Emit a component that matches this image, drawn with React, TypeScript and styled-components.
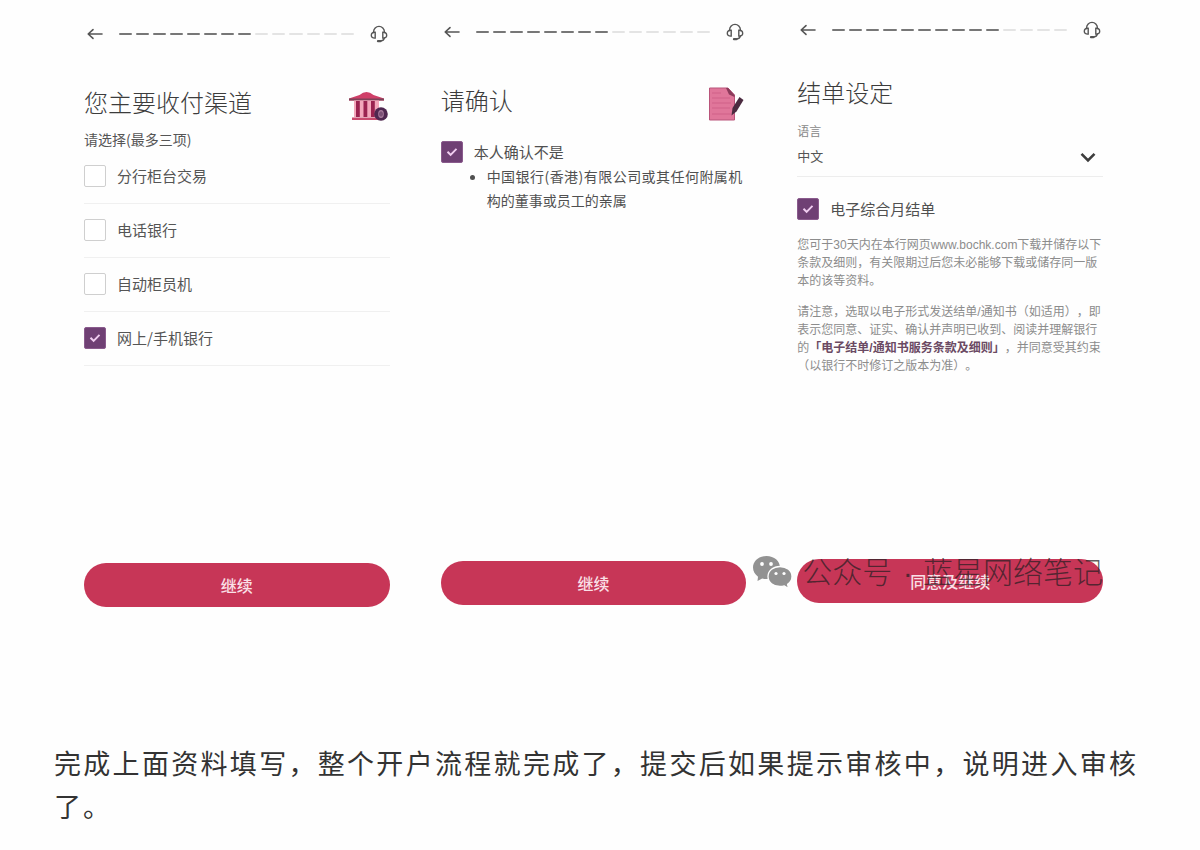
import React from "react";
import styled, { createGlobalStyle } from "styled-components";

const GlobalStyle = createGlobalStyle`
  *, *::before, *::after { box-sizing: border-box; }
  body {
    margin: 0;
    background: #fefefe;
    color: #333;
    font-family: "Noto Sans CJK SC", "Noto Sans", sans-serif;
    text-spacing-trim: space-all;
  }
`;

const Article = styled.main`
  padding-bottom: 20px;
`;

const Stage = styled.section`
  position: relative;
  display: grid;
  grid-template-columns: repeat(3, minmax(0, 1fr));
  align-items: start;
  gap: 51px;
  padding: 0 97px 0 84px;
`;

const Screen = styled.form<{ $top: number }>`
  display: flex;
  flex-direction: column;
  min-height: 583px;
  margin-top: ${(p) => p.$top}px;
`;

const TopBar = styled.header`
  display: flex;
  align-items: center;
  gap: 16px;
  height: 20px;
  padding: 0 2px 0 3px;
`;

const IconButton = styled.button`
  display: flex;
  flex: none;
  padding: 0;
  border: 0;
  background: none;
  color: #555;
`;

const Steps = styled.div`
  display: flex;
  flex: 1;
  gap: 4px;
`;

const Step = styled.span<{ $done: boolean }>`
  flex: 1;
  height: 2px;
  border-radius: 1px;
  background: ${(p) => (p.$done ? "#777" : "#e4e4e4")};
`;

const TitleRow = styled.div<{ $gap: number }>`
  display: flex;
  align-items: center;
  justify-content: space-between;
  height: 36px;
  margin-top: ${(p) => p.$gap}px;
`;

const Title = styled.h2`
  margin: 0;
  font-size: 24px;
  font-weight: 300;
  line-height: 36px;
  color: #3c3c3c;
`;

const Picture = styled.span`
  display: flex;
  padding: 8px 2px 0 0;
`;

const Hint = styled.p`
  margin: 9px 0 0;
  font-size: 14px;
  line-height: 20px;
  color: #555;
`;

const Options = styled.div`
  display: flex;
  flex-direction: column;
  margin-top: 1px;
`;

const Option = styled.label`
  display: flex;
  align-items: center;
  gap: 11px;
  height: 54px;
  padding-bottom: 2px;
  border-bottom: 1px solid #f0f0f0;
  font-size: 15px;
  line-height: 22px;
  color: #555;
`;

const Consent = styled.label<{ $gap: number }>`
  display: flex;
  align-items: center;
  gap: 11px;
  height: 24px;
  margin-top: ${(p) => p.$gap}px;
  font-size: 15px;
  line-height: 22px;
  color: #505050;
`;

const CheckCell = styled.span`
  display: grid;
  flex: none;
  place-items: center;
  > * { grid-area: 1 / 1; }
`;

const CheckInput = styled.input`
  appearance: none;
  width: 22px;
  height: 22px;
  margin: 0;
  border: 1px solid #cfcfcf;
  border-radius: 2px;
  background: #fff;
  &:checked {
    border-color: #8a5b8d;
    background: #6f4074;
  }
  & + svg { visibility: hidden; pointer-events: none; }
  &:checked + svg { visibility: visible; }
`;

const Terms = styled.ul`
  margin: 0;
  padding: 0 4px 0 46px;
  font-size: 14px;
  line-height: 24px;
  color: #505050;
  text-align: justify;
`;

const FieldLabel = styled.label`
  margin-top: 13px;
  font-size: 12px;
  line-height: 16px;
  color: #888;
`;

const SelectWrap = styled.div`
  display: grid;
  align-items: center;
  border-bottom: 1px solid #ededed;
  > * { grid-area: 1 / 1; }
  svg { justify-self: end; margin-right: 7px; pointer-events: none; }
`;

const Select = styled.select`
  appearance: none;
  width: 100%;
  height: 37px;
  padding: 0 0 4px;
  border: 0;
  background: none;
  color: #555;
  font: 13px "Noto Sans CJK SC", sans-serif;
`;

const Legal = styled.p<{ $gap: number }>`
  margin: ${(p) => p.$gap}px 0 0;
  font-family: "Liberation Sans", "Noto Sans CJK SC", sans-serif;
  font-size: 12px;
  line-height: 18px;
  color: #8c8c8c;
  white-space: nowrap;
`;

const TermsLink = styled.a`
  color: #6b4a63;
  font-weight: 700;
  text-decoration: none;
`;

const Submit = styled.button`
  height: 44px;
  margin-top: auto;
  border: 0;
  border-radius: 22px;
  background: #c73657;
  color: #fae0e7;
  font: 500 16px "Noto Sans CJK SC", sans-serif;
`;

const Watermark = styled.div`
  position: absolute;
  right: 97px;
  bottom: 12px;
  display: flex;
  align-items: center;
  gap: 9px;
  font-size: 30px;
  font-weight: 300;
  line-height: 44px;
  color: rgba(40, 30, 35, 0.72);
  white-space: nowrap;
  pointer-events: none;
`;

const Dot = styled.span`
  padding: 0 2px;
  font-family: "Liberation Sans", sans-serif;
  white-space: pre;
`;

const Paragraph = styled.p`
  margin: 134px 62px 0 54px;
  font-size: 27px;
  letter-spacing: 2px;
  line-height: 43px;
  color: #333;
  text-align: justify;
`;

const BackIcon = () => (
  <svg width="16" height="14" viewBox="0 0 16 14" fill="none" stroke="currentColor" strokeWidth="1.6" strokeLinecap="round" strokeLinejoin="round">
    <path d="M15 7H1.2M6 2.6L1.2 7L6 11.4" />
  </svg>
);

const HeadsetIcon = () => (
  <svg width="18" height="18" viewBox="0 0 18 18" fill="none" stroke="currentColor" strokeWidth="1.4" strokeLinecap="round">
    <path d="M3.6 7.5V6.8a5.4 5.4 0 0 1 10.8 0v.7" />
    <path d="M5.2 7.3c-2.3-.3-3.9.9-3.9 2.9s1.6 3.2 3.9 2.9z" />
    <path d="M12.8 7.3c2.3-.3 3.9.9 3.9 2.9s-1.6 3.2-3.9 2.9z" />
    <path d="M14.4 13c-.4 1.6-1.6 2.7-3.6 3" />
    <path d="M8 16.2h2.4" strokeWidth="2.3" />
  </svg>
);

const BankIcon = () => (
  <svg width="40" height="32" viewBox="0 0 40 32">
    <path d="M1 8.5L11.5 5Q18.500 -1 25.5 5L36 8.5V10.5H1z" fill="#cf3f68" />
    <path d="M1 8.5H36V10.5H1z" fill="#7d4258" />
    <path d="M6 10.5H31V27H6z" fill="#f3a7bb" />
    <path d="M8 11h3.8v16H8zM15.5 11h3.8v16h-3.8zM23 11h3.8v16H23z" fill="#9a2350" />
    <path d="M4 27.5H30V30H4z" fill="#c94a6e" />
    <circle cx="33" cy="24" r="6.8" fill="#4f2850" />
    <ellipse cx="33" cy="24" rx="2.2" ry="3.4" fill="none" stroke="#a87a9c" strokeWidth="1.3" />
    <path d="M33 20v8" stroke="#a87a9c" strokeWidth="1" />
  </svg>
);

const FormIcon = () => (
  <svg width="36" height="34" viewBox="0 0 36 34">
    <path d="M1.5 1H20L26.5 8V33H1.5z" fill="#e0769a" stroke="#b9547a" strokeWidth="1" />
    <path d="M18 1H20L26.5 8V10L21 7.5z" fill="#8b3b5b" />
    <path d="M4 6H13M4 11H22M4 16H23M4 21H22M4 27H23" stroke="#cf6087" strokeWidth="1.2" />
    <path d="M31.5 10L35.5 13L28.5 24.500L23.5 28.5L24.500 21z" fill="#4b2b40" />
  </svg>
);

const TickIcon = () => (
  <svg width="12" height="10" viewBox="0 0 12 10" fill="none" stroke="#f0cdf0" strokeWidth="1.9">
    <path d="M1.5 4.8L4.6 7.8L10.5 1.8" />
  </svg>
);

const ChevronIcon = () => (
  <svg width="16" height="11" viewBox="0 0 16 11" fill="none" stroke="#3d3d3d" strokeWidth="2.6">
    <path d="M1.5 1.8L8 8.4L14.5 1.8" />
  </svg>
);

const WeChatIcon = () => (
  <svg width="41" height="34" viewBox="0 0 41 34">
    <path d="M14.5 1C6.7 1 1 6 1 12.6c0 3.8 2 7 5 9.1L5.5 26l4.7-2.6c1.4.4 2.8.7 4.3.7 7.7 0 13.5-5 13.5-11.5S22.200 1 14.500 1z" fill="#929292" />
    <path d="M28 11.5c-6.7 0-12 4.3-12 10s5.3 10 12 10c1.5 0 3-.2 4.3-.6l4.2 2.6-.9-4.2c2.8-1.9 4.4-4.7 4.4-7.8 0-5.7-5.3-10-12-10z" fill="#929292" stroke="#fff" strokeWidth="1.3" />
    <g fill="#fff">
      <circle cx="10" cy="9" r="1.9" />
      <circle cx="19" cy="9" r="1.9" />
      <circle cx="24" cy="18.5" r="1.6" />
      <circle cx="32" cy="18.5" r="1.6" />
    </g>
  </svg>
);

const STEP_COUNT = 14;

function Header({ done }: { done: number }) {
  return (
    <TopBar>
      <IconButton type="button" aria-label="返回"><BackIcon /></IconButton>
      <Steps>
        {Array.from({ length: STEP_COUNT }, (_, i) => (
          <Step key={i} $done={i < done} />
        ))}
      </Steps>
      <IconButton type="button" aria-label="客服"><HeadsetIcon /></IconButton>
    </TopBar>
  );
}

function Checkbox({ checked, id }: { checked?: boolean; id: string }) {
  return (
    <CheckCell>
      <CheckInput type="checkbox" id={id} defaultChecked={checked} />
      <TickIcon />
    </CheckCell>
  );
}

const channels = [
  { id: "branch", label: "分行柜台交易" },
  { id: "phone", label: "电话银行" },
  { id: "atm", label: "自动柜员机" },
  { id: "online", label: "网上/手机银行", checked: true },
];

export default function App() {
  return (
    <Article>
      <GlobalStyle />
      <Stage>
        <Screen $top={24}>
          <Header done={8} />
          <TitleRow $gap={40}>
            <Title>您主要收付渠道</Title>
            <Picture><BankIcon /></Picture>
          </TitleRow>
          <Hint>请选择(最多三项)</Hint>
          <Options>
            {channels.map((c) => (
              <Option key={c.id} htmlFor={c.id}>
                <Checkbox id={c.id} checked={c.checked} />
                {c.label}
              </Option>
            ))}
          </Options>
          <Submit type="button">继续</Submit>
        </Screen>

        <Screen $top={22}>
          <Header done={8} />
          <TitleRow $gap={40}>
            <Title>请确认</Title>
            <Picture><FormIcon /></Picture>
          </TitleRow>
          <Consent $gap={22} htmlFor="confirm">
            <Checkbox id="confirm" checked />
            本人确认不是
          </Consent>
          <Terms>
            <li>中国银行(香港)有限公司或其任何附属机构的董事或员工的亲属</li>
          </Terms>
          <Submit type="button">继续</Submit>
        </Screen>

        <Screen $top={20}>
          <Header done={10} />
          <TitleRow $gap={34}>
            <Title>结单设定</Title>
          </TitleRow>
          <FieldLabel htmlFor="language">语言</FieldLabel>
          <SelectWrap>
            <Select id="language" defaultValue="zh">
              <option value="zh">中文</option>
            </Select>
            <ChevronIcon />
          </SelectWrap>
          <Consent $gap={20} htmlFor="statement">
            <Checkbox id="statement" checked />
            电子综合月结单
          </Consent>
          <Legal $gap={15}>
            您可于30天内在本行网页www.bochk.com下载并储存以下<br />
            条款及细则，有关限期过后您未必能够下载或储存同一版<br />
            本的该等资料。
          </Legal>
          <Legal $gap={13}>
            请注意，选取以电子形式发送结单/通知书（如适用），即<br />
            表示您同意、证实、确认并声明已收到、阅读并理解银行<br />
            的<TermsLink href="#terms">「电子结单/通知书服务条款及细则」</TermsLink>，并同意受其约束<br />
            （以银行不时修订之版本为准）。
          </Legal>
          <Submit type="button">同意及继续</Submit>
        </Screen>

        <Watermark>
          <WeChatIcon />
          <span>公众号<Dot> · </Dot>蓝星网络笔记</span>
        </Watermark>
      </Stage>
      <Paragraph>
        完成上面资料填写，整个开户流程就完成了，提交后如果提示审核中，说明进入审核了。
      </Paragraph>
    </Article>
  );
}
